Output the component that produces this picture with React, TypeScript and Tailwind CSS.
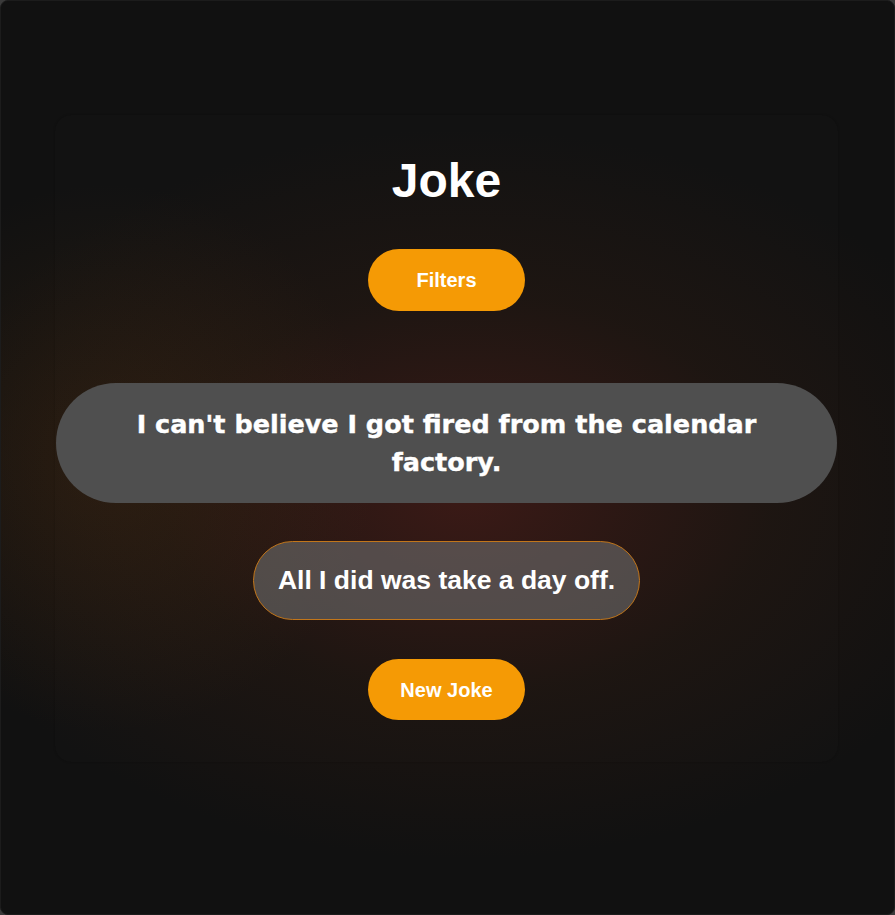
import { useState } from "react"

const jokes = [
  {
    setup: "I can't believe I got fired from the calendar factory.",
    punchline: "All I did was take a day off.",
  },
]

export default function App() {
  const [index] = useState(0)
  const joke = jokes[index]

  return (
    <div className="w-full h-[915px] bg-[#3a3a3a] font-['Liberation_Sans',Arial,sans-serif]">
      <div className="w-full h-full rounded-lg border border-[#1c1c1c] bg-[#111111] overflow-hidden flex justify-center pr-[2px] bg-[radial-gradient(ellipse_30%_30%_at_12%_50%,rgba(95,55,15,0.25),transparent_100%),radial-gradient(ellipse_62%_40%_at_52%_54%,rgba(85,30,24,0.6),rgba(52,28,16,0.32)_55%,transparent_100%)]">
        <div className="mt-[114px] w-[783px] h-[647px] rounded-2xl flex flex-col items-center pt-[42px] bg-[rgba(255,255,255,0.008)] shadow-[0_0_2px_rgba(0,0,0,0.25)]">
          <h1 className="text-[48px] leading-[48px] font-bold text-white">Joke</h1>

          <button className="mt-[44px] w-[157px] h-[62px] rounded-full bg-[#f59a05] text-white text-[20px] font-bold">
            Filters
          </button>

          <div className="mt-[72px] w-[781px] h-[120px] rounded-full bg-[#4f4f4f] flex items-center justify-center px-16">
            <p className="text-center text-white text-[25.5px] leading-[38px] font-bold font-['DejaVu_Sans',sans-serif] [-webkit-text-stroke:0.4px_white]">
              {joke.setup}
            </p>
          </div>

          <div className="mt-[38px] h-[79px] px-6 rounded-full bg-[rgba(110,110,110,0.6)] border border-[#c2761a] flex items-center">
            <p className="text-white text-[26.5px] font-bold">{joke.punchline}</p>
          </div>

          <button className="mt-[39px] w-[157px] h-[61px] rounded-full bg-[#f59a05] text-white text-[20px] font-bold">
            New Joke
          </button>
        </div>
      </div>
    </div>
  )
}
